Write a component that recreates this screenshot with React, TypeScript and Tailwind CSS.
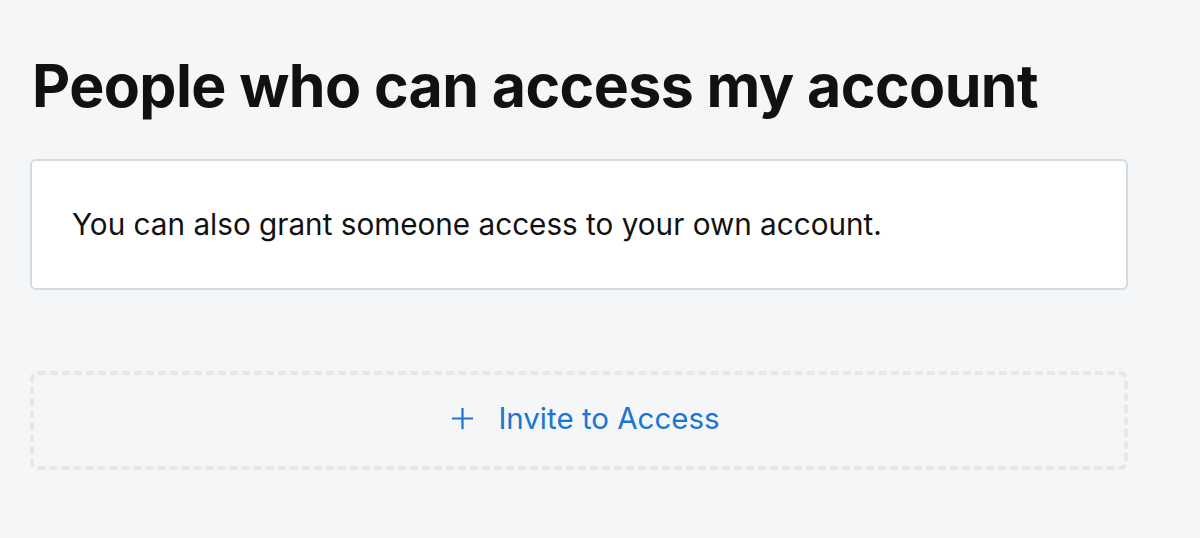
export default function App() {
  return (
    <div
      className="min-h-[538px] bg-[#f5f6f8] pl-[30px] pr-[72px] pt-[46px]"
      style={{ fontFamily: "Inter, 'Noto Sans', sans-serif" }}
    >
      <h1 className="pl-[2px] text-[59px] font-bold leading-[80px] tracking-[-0.01em] text-[#111111]">
        People who can access my account
      </h1>

      <div className="mt-[33px] flex h-[131px] items-center rounded-[6px] border-2 border-[#d4dbe0] bg-white px-[40px]">
        <p className="text-[29.7px] text-[#111111]">
          You can also grant someone access to your own account.
        </p>
      </div>

      <button className="mt-[81px] flex h-[99px] w-full items-center justify-center gap-[25px] rounded-[8px] border-4 border-dashed border-[#e6e7e8] pb-[5px] pl-[14px] text-[#1976d2]">
        <svg width="21" height="21" viewBox="0 0 21 21" fill="none" stroke="currentColor" strokeWidth="2.2">
          <path d="M10.5 0v21M0 10.5h21" />
        </svg>
        <span className="text-[29.5px]">Invite to Access</span>
      </button>
    </div>
  );
}
